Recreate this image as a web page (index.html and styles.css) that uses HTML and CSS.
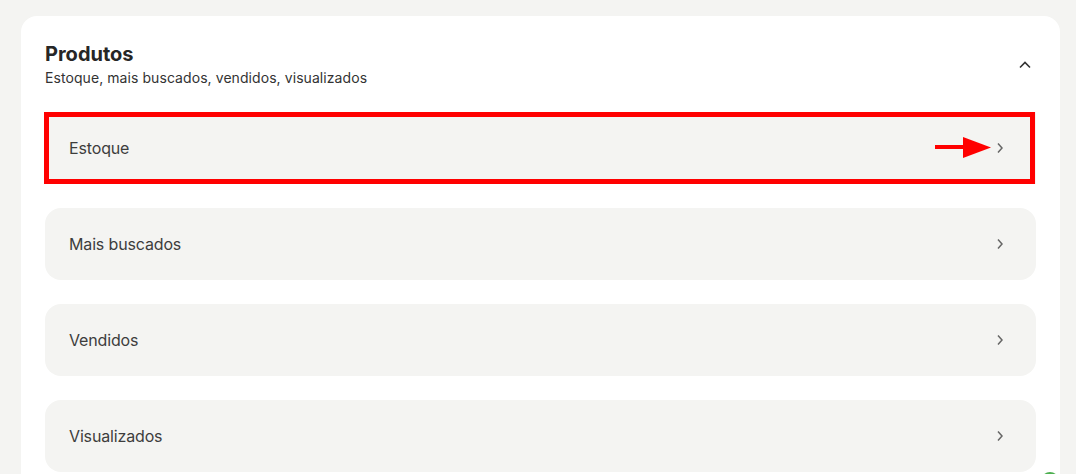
FILE: index.html
```html
<!DOCTYPE html>
<html lang="pt-BR">
<head>
<meta charset="utf-8">
<link rel="stylesheet" href="styles.css">
</head>
<body>
<main class="page">
  <section class="card">
    <header class="card-header">
      <div class="titles">
        <h2 class="title">Produtos</h2>
        <p class="subtitle">Estoque, mais buscados, vendidos, visualizados</p>
      </div>
      <svg class="toggle" width="14" height="10" viewBox="0 0 14 10"><path d="M2 7.5 L7 2.5 L12 7.5" fill="none" stroke="#333" stroke-width="1.6"/></svg>
    </header>
    <ul class="list">
      <li class="item item--marked">
        <span class="label">Estoque</span>
        <svg class="chev" width="8" height="12" viewBox="0 0 8 12"><path d="M2 1.5 L6 6 L2 10.5" fill="none" stroke="#666" stroke-width="1.5"/></svg>
        <span class="mark"></span>
        <svg class="arrow" width="58" height="22" viewBox="0 0 58 22"><rect x="0" y="8" width="30" height="4" fill="#ff0000"/><polygon points="28,0 56,10.5 28,21" fill="#ff0000"/></svg>
      </li>
      <li class="item">
        <span class="label">Mais buscados</span>
        <svg class="chev" width="8" height="12" viewBox="0 0 8 12"><path d="M2 1.5 L6 6 L2 10.5" fill="none" stroke="#666" stroke-width="1.5"/></svg>
      </li>
      <li class="item">
        <span class="label">Vendidos</span>
        <svg class="chev" width="8" height="12" viewBox="0 0 8 12"><path d="M2 1.5 L6 6 L2 10.5" fill="none" stroke="#666" stroke-width="1.5"/></svg>
      </li>
      <li class="item">
        <span class="label">Visualizados</span>
        <svg class="chev" width="8" height="12" viewBox="0 0 8 12"><path d="M2 1.5 L6 6 L2 10.5" fill="none" stroke="#666" stroke-width="1.5"/></svg>
      </li>
    </ul>
  </section>
  <span class="fab"></span>
</main>
</body>
</html>
```
FILE: styles.css
```css
* { box-sizing: border-box; }
html, body { margin: 0; padding: 0; }
body {
  background: #f4f4f2;
  font-family: Inter, "Noto Sans", sans-serif;
  color: #2b2b2b;
  width: 1076px;
  height: 474px;
  overflow: hidden;
}
.page {
  position: relative;
  padding: 16px 16px 0 21px;
}
.card {
  background: #ffffff;
  border-radius: 16px;
  padding: 24px 24px 24px 24px;
}
.card-header {
  display: flex;
  align-items: center;
  justify-content: space-between;
  margin-bottom: 24px;
}
.title {
  margin: 0;
  font-size: 20px;
  line-height: 28px;
  font-weight: 700;
  color: #262626;
}
.subtitle {
  margin: 0;
  font-size: 14px;
  line-height: 20px;
  font-weight: 400;
  letter-spacing: 0.07px;
  color: #333;
}
.toggle { margin-right: 4px; margin-top: 2px; }
.list {
  list-style: none;
  margin: 0;
  padding: 0;
  display: flex;
  flex-direction: column;
  gap: 24px;
}
.item {
  position: relative;
  height: 72px;
  background: #f4f4f2;
  border-radius: 16px;
  display: flex;
  align-items: center;
  justify-content: space-between;
  padding: 0 32px 0 24px;
}
.item--marked { border-radius: 0; }
.label {
  font-size: 16px;
  letter-spacing: -0.15px;
  color: #3d3d3d;
}
.mark {
  position: absolute;
  left: -1px;
  top: 0;
  width: 991px;
  height: 72px;
  border: 5px solid #ff0000;
}
.arrow {
  position: absolute;
  left: 890px;
  top: 25px;
}
.fab {
  position: absolute;
  left: 1041px;
  top: 472px;
  width: 18px;
  height: 18px;
  border-radius: 50%;
  background: #4caf50;
}
```
